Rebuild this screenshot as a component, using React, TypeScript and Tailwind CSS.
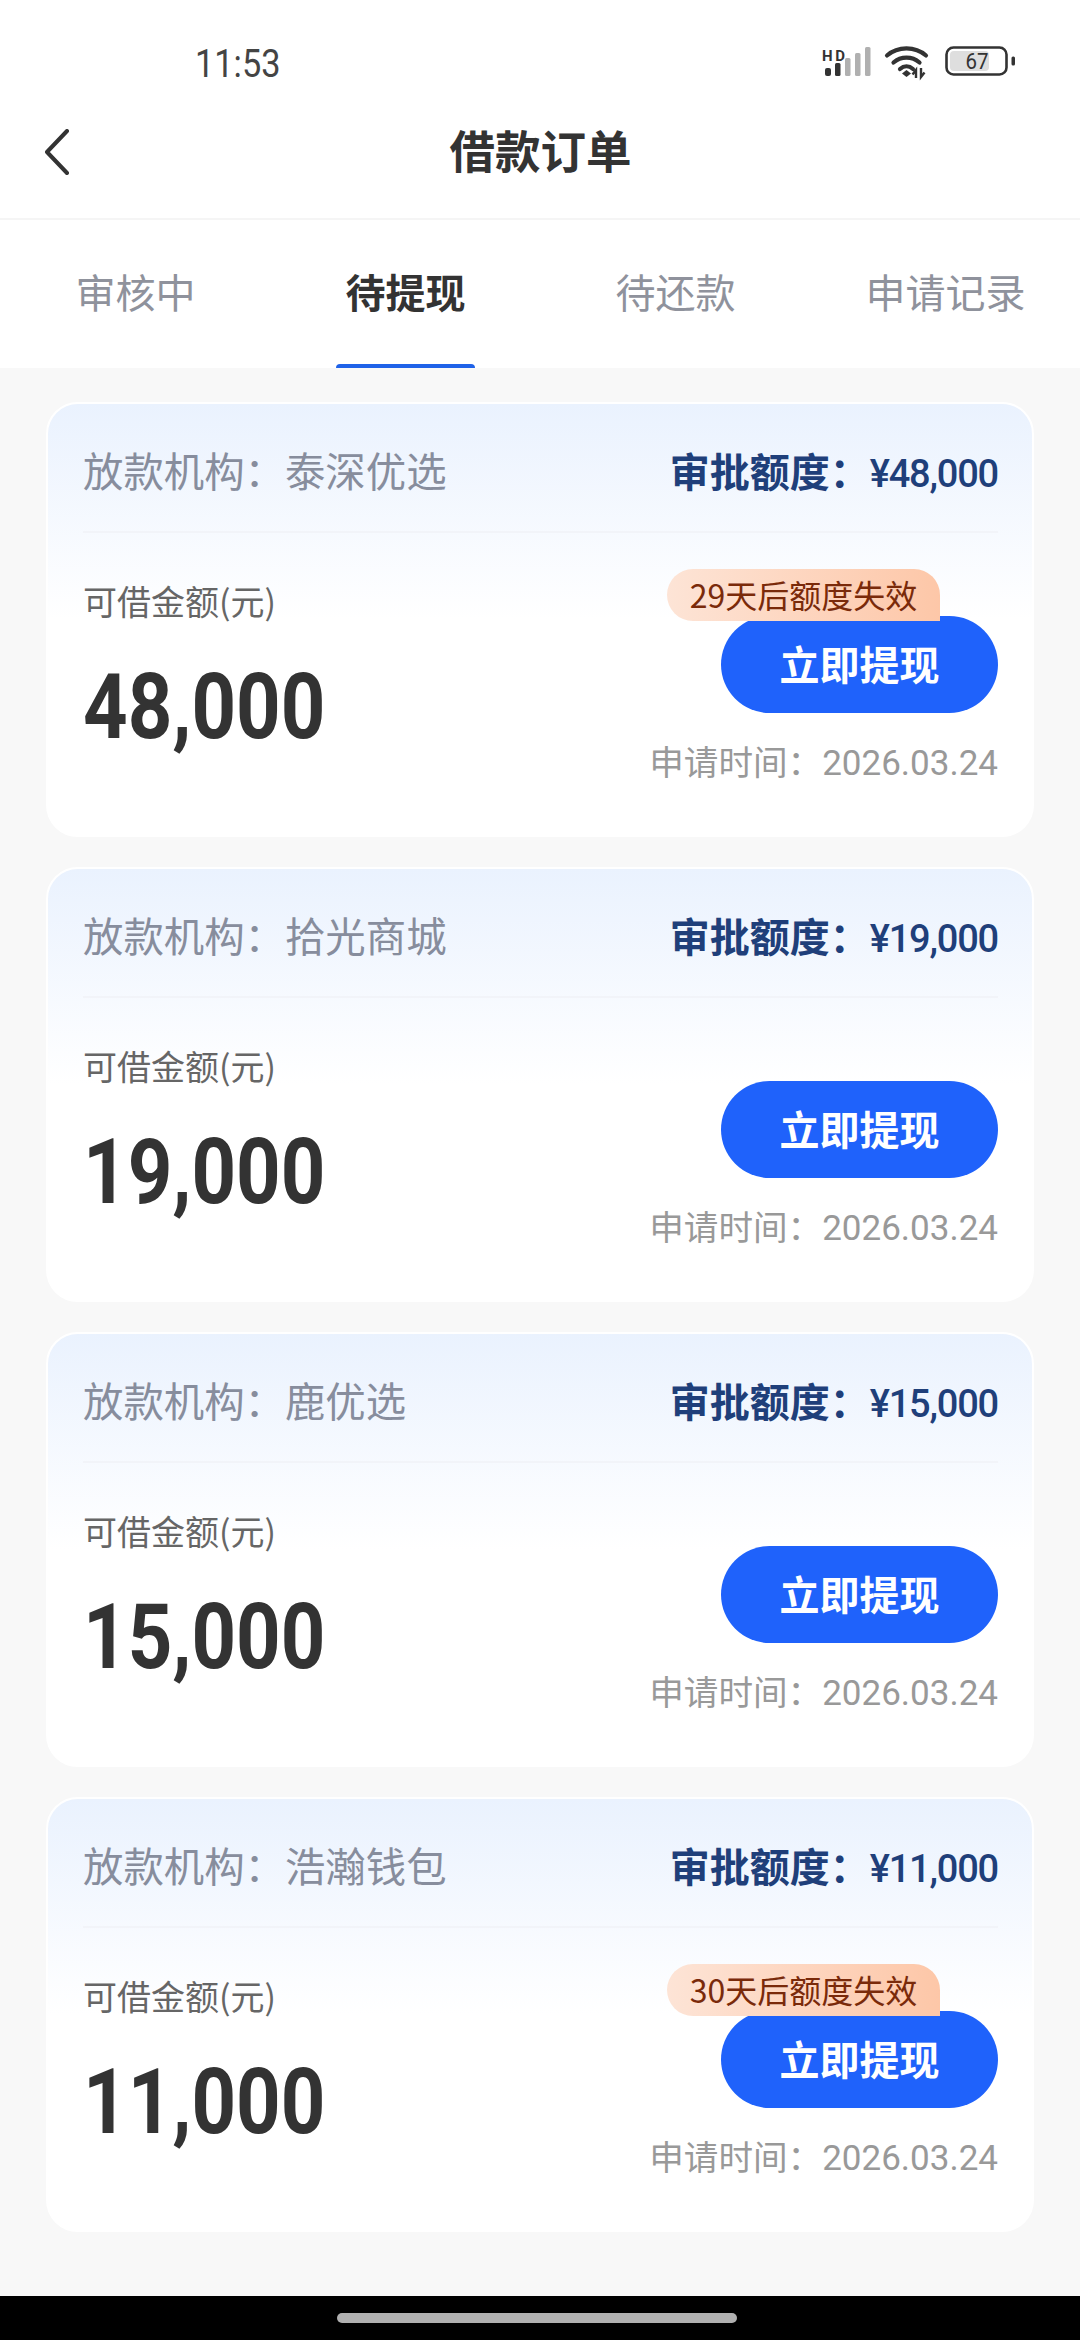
import React from "react";

const CJK = "font-['Noto_Sans_CJK_SC','Noto_Sans',sans-serif]";
const NUM = "font-['Roboto','Noto_Sans_CJK_SC',sans-serif]";

function StatusIcons() {
  return (
    <svg width="194" height="36" viewBox="0 0 194 36" className="block">
      <text x="0" y="15" fontFamily="Roboto, sans-serif" fontWeight="700" fontSize="15" fill="#333" textLength="23">HD</text>
      <g fill="#333">
        <rect x="3" y="22" width="6" height="8" rx="2" />
        <rect x="13" y="17" width="5.5" height="13" rx="1.5" />
      </g>
      <g fill="#b0b0b0">
        <rect x="23" y="12" width="5.5" height="18" rx="1.5" />
        <rect x="33" y="7" width="5.5" height="23" rx="1.5" />
        <rect x="43" y="1" width="5.5" height="29" rx="1.5" />
      </g>
      <g fill="none" stroke="#333" strokeWidth="4.2" strokeLinecap="round">
        <path d="M65 9.5C76 0 93 0 104 9.5" />
        <path d="M71.5 16.5C79 10 90 10 97.5 16.5" />
        <path d="M78 23C82 19.5 87 19.5 91 23" />
      </g>
      <path d="M80 27.5L84.5 24l4.5 3.5-4.5 3.5z" fill="#333" />
      <path d="M94 32v-8l-3.5 4.5M99 22v9l3.5-4.5" fill="none" stroke="#333" strokeWidth="2.4" />
      <rect x="124.5" y="1.5" width="60" height="27" rx="7" fill="none" stroke="#333" strokeWidth="2.6" />
      <rect x="128" y="5" width="39" height="20" rx="4" fill="#dedede" />
      <text x="155" y="23" textAnchor="middle" fontFamily="Roboto, sans-serif" fontSize="22" fill="#333" textLength="23" lengthAdjust="spacingAndGlyphs">67</text>
      <rect x="189.5" y="10.5" width="3.5" height="9" rx="1.5" fill="#333" />
    </svg>
  );
}

const orders = [
  { org: "泰深优选", quota: "48,000", badge: "29天后额度失效" },
  { org: "拾光商城", quota: "19,000" },
  { org: "鹿优选", quota: "15,000" },
  { org: "浩瀚钱包", quota: "11,000", badge: "30天后额度失效" },
];

function OrderCard({ org, quota, badge }: { org: string; quota: string; badge?: string }) {
  return (
    <div className="h-[435px] rounded-[32px] border-2 border-white bg-gradient-to-b from-[#eaf2fe] via-white via-[50%] to-white pl-[35px] pr-[34px]">
      <div className="flex h-[129px] items-baseline justify-between border-b-2 border-[#f2f4f9] pt-[38px]">
        <div className="text-[40.4px] leading-[56px] text-[#878d9d]">放款机构：{org}</div>
        <div className="flex items-baseline text-[40px] font-bold leading-[56px] text-[#1f3f7a]">
          <span>审批额度：</span>
          <span className={`${NUM} text-[38px] font-medium tracking-[-1.2px]`}>¥{quota}</span>
        </div>
      </div>
      <div className="flex justify-between">
        <div className="pt-[46px]">
          <div className="text-[34px] leading-[44px] text-[#666666]">可借金额(元)</div>
          <div className={`${NUM} mt-[34px] origin-left scale-x-[0.855] text-[91px] font-bold leading-[100px] text-[#333333]`}>{quota}</div>
        </div>
        <div className="flex flex-col items-end pt-[83px]">
          <div className="relative flex h-[97px] w-[277px] items-center justify-center rounded-full bg-[#1f62fb] pb-[4px] text-[40px] font-bold text-white">
            立即提现
            {badge && (
              <div className="absolute right-[58px] top-[-47px] flex h-[52px] w-[273px] items-center justify-center whitespace-nowrap rounded-t-[26px] rounded-bl-[26px] bg-gradient-to-r from-[#fde4d6] to-[#fdc7a8] pb-[2px] text-[32px] font-normal text-[#7a2a0a]">
                {badge}
              </div>
            )}
          </div>
          <div className="mt-[24px] flex items-baseline text-[34.6px] leading-[46px] text-[#999999]">
            <span>申请时间：</span>
            <span className={`${NUM} text-[35px]`}>2026.03.24</span>
          </div>
        </div>
      </div>
    </div>
  );
}

export default function App() {
  return (
    <div className={`${CJK} flex h-[2340px] w-[1080px] flex-col overflow-hidden bg-[#f8f8f8]`}>
      <div className="bg-white">
        <div className="flex h-[124px] items-center justify-between pl-[195px] pr-[64px] pt-[4px]">
          <span className={`${NUM} origin-left scale-x-[0.88] text-[39px] text-[#444444]`}>11:53</span>
          <StatusIcons />
        </div>
        <div className="relative flex h-[96px] items-start justify-center border-b-2 border-[#f5f5f5]">
          <svg width="28" height="46" viewBox="0 0 28 46" className="absolute left-[43px] top-[5px]">
            <path d="M24 2L4 23l20 21" fill="none" stroke="#333" strokeWidth="4" strokeLinecap="round" strokeLinejoin="round" />
          </svg>
          <div className="pl-[1px] text-[45.5px] font-bold leading-[50px] text-[#333333]">借款订单</div>
        </div>
        <div className="grid h-[148px] grid-cols-4">
          {["审核中", "待提现", "待还款", "申请记录"].map((t, i) => (
            <div key={t} className={`relative flex items-center justify-center pb-[6px] pl-[1px] text-[40px] ${i === 1 ? "font-bold text-[#333333]" : "text-[#8f929c]"}`}>
              {t}
              {i === 1 && <div className="absolute bottom-0 left-[66px] h-[4px] w-[139px] rounded-t-[4px] bg-[#1f62e8]" />}
            </div>
          ))}
        </div>
      </div>
      <div className="flex flex-1 flex-col gap-[30px] px-[46px] pt-[34px]">
        {orders.map((o) => (
          <OrderCard key={o.org} {...o} />
        ))}
      </div>
      <div className="flex h-[44px] justify-center bg-black pt-[17px]">
        <div className="mr-[7px] h-[10px] w-[400px] rounded-full bg-[#b0b0b0]" />
      </div>
    </div>
  );
}
